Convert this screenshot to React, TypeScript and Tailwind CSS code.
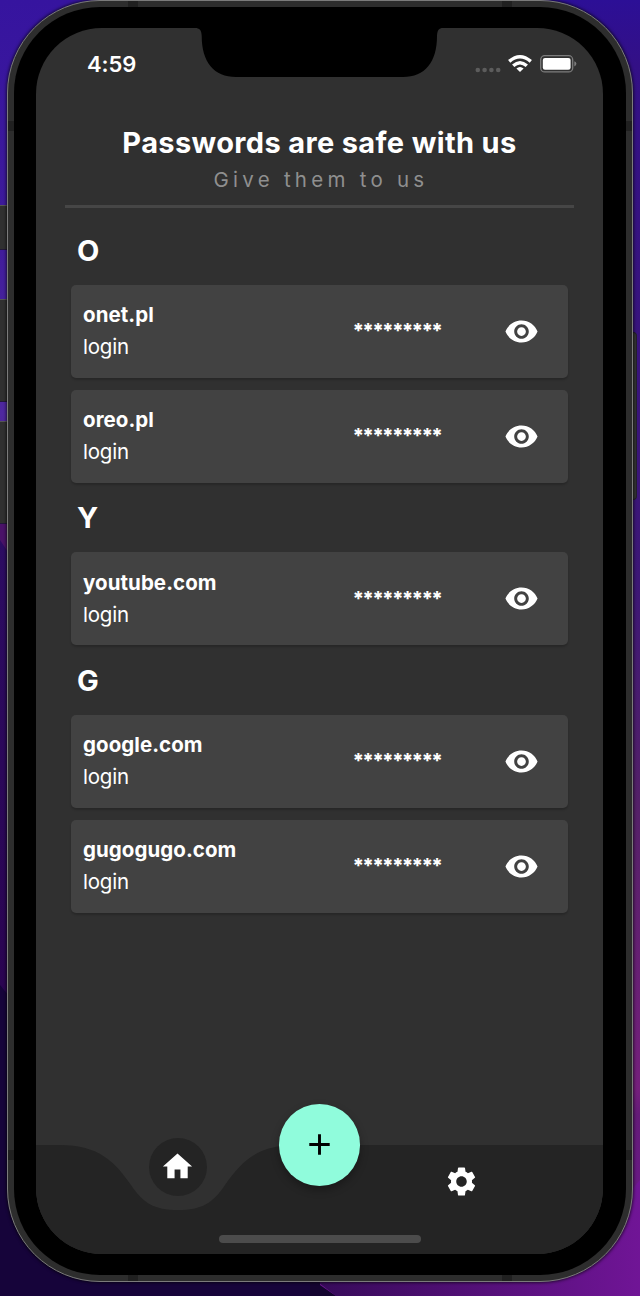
import { MdAdd, MdHome, MdRemoveRedEye, MdSettings } from "react-icons/md";

const sections = [
  { letter: "O", sites: ["onet.pl", "oreo.pl"] },
  { letter: "Y", sites: ["youtube.com"] },
  { letter: "G", sites: ["google.com", "gugogugo.com"] },
];

function Wallpaper() {
  return (
    <svg className="absolute inset-0 h-full w-full" viewBox="0 0 640 1296" preserveAspectRatio="none" aria-hidden="true">
      <defs>
        <linearGradient id="left" x1="0" y1="0" x2="0" y2="1">
          <stop offset="0" stopColor="#36149f" />
          <stop offset="0.16" stopColor="#3d1a9a" />
          <stop offset="0.32" stopColor="#4f28a0" />
          <stop offset="0.4" stopColor="#4a1268" />
        </linearGradient>
        <linearGradient id="leftLow" x1="0" y1="0" x2="0" y2="1">
          <stop offset="0" stopColor="#2c0c62" />
          <stop offset="1" stopColor="#2a0450" />
        </linearGradient>
        <linearGradient id="right" x1="0" y1="0" x2="0" y2="1">
          <stop offset="0" stopColor="#2c0f96" />
          <stop offset="0.05" stopColor="#331086" />
          <stop offset="0.45" stopColor="#3d1776" />
          <stop offset="0.62" stopColor="#542068" />
          <stop offset="0.84" stopColor="#751f7c" />
          <stop offset="0.86" stopColor="#641b78" />
          <stop offset="1" stopColor="#701596" />
        </linearGradient>
        <linearGradient id="bottom" x1="0" y1="0" x2="1" y2="0">
          <stop offset="0" stopColor="#350a58" />
          <stop offset="1" stopColor="#701596" />
        </linearGradient>
      </defs>
      <rect width="320" height="1296" fill="url(#left)" />
      <path d="M0 540L8 552V1000H0Z" fill="url(#leftLow)" />
      <path d="M0 985L8 995V1160L320 1240V1296H0Z" fill="#16043a" />
      <rect x="320" width="320" height="1296" fill="url(#right)" />
      <path d="M310 1276L560 1276L640 1180V1296H336Z" fill="url(#bottom)" />
      <path d="M320 1270V1285L336 1296H310V1270Z" fill="#14042f" />
    </svg>
  );
}

function SideButtons() {
  return (
    <div className="flex w-[7px] flex-col pt-[205px]">
      <div className="h-[45px] border-y border-t-[#555] border-b-[#22183a] bg-[#303030]" />
      <div className="mt-[49px] h-[103px] border-y border-t-[#555] border-b-[#22183a] bg-[#303030]" />
      <div className="mt-[19px] h-[103px] border-y border-t-[#555] border-b-[#22183a] bg-[#303030]" />
    </div>
  );
}

function BandRow() {
  return (
    <div className="flex h-1.5 justify-between px-[120px]">
      <span className="w-2.5 bg-[#202020]" />
      <span className="w-2.5 bg-[#202020]" />
    </div>
  );
}

function BandColumn() {
  return (
    <div className="flex w-1.5 flex-col justify-between pt-[114px] pb-[115px]">
      <span className="h-2.5 bg-[#202020]" />
      <span className="h-2.5 bg-[#202020]" />
    </div>
  );
}

function StatusBar() {
  return (
    <div className="flex h-[72px] items-center justify-between pr-[26px] pl-[51px]">
      <span className="text-[22px] leading-none font-semibold tracking-[-0.1px]">4:59</span>
      <svg className="h-6 w-[102px]" viewBox="475 52 102 24" aria-hidden="true">
        {[477.8, 484.6, 491.4, 498.2].map((x) => (
          <circle key={x} cx={x} cy="70" r="2.3" fill="#5c5c5c" />
        ))}
        <g fill="none" stroke="#fff" strokeWidth="3.4">
          <path d="M509.2 61.4Q520 52 530.8 61.4" />
          <path d="M513.2 65.8Q520 59.6 526.8 65.8" />
        </g>
        <path d="M516.4 68.6Q520 65.4 523.6 68.6L520 72Z" fill="#fff" />
        <rect x="540.7" y="55.7" width="32" height="16.2" rx="4" fill="none" stroke="#7c7c7c" strokeWidth="1.3" />
        <rect x="542.8" y="57.9" width="27.8" height="11.8" rx="2.2" fill="#fff" />
        <path d="M574.3 61.2Q576.4 62 576.4 63.8T574.3 66.4Z" fill="#7c7c7c" />
      </svg>
    </div>
  );
}

function PasswordCard({ site }: { site: string }) {
  return (
    <article className="flex h-[93px] items-center rounded-[5px] bg-[#424242] pr-[29px] pl-3 shadow-[0_2px_2px_rgba(0,0,0,0.18)]">
      <div className="w-[269.5px]">
        <h3 className="text-[20.5px] leading-8 font-bold tracking-[0.06px]">{site}</h3>
        <p className="text-[20.5px] leading-8 tracking-[-0.2px]">login</p>
      </div>
      <span className="flex-1 text-[20px] leading-8 font-extrabold tracking-[-1.8px]">*********</span>
      <MdRemoveRedEye size={35} />
    </article>
  );
}

function BottomNav() {
  return (
    <nav className="relative flex h-[109px] flex-col items-center justify-end pb-[11.5px]">
      <svg className="absolute inset-0 h-full w-full" viewBox="36 1145 567 109" preserveAspectRatio="none" aria-hidden="true">
        <path
          d="M36 1145H60C99 1145 115 1162 131 1185C143 1203 154 1210 178 1210C202 1210 213 1203 225 1185C241 1162 257 1145 296 1145H603V1254H36Z"
          fill="#242424"
        />
      </svg>
      <div className="relative mb-[36px] flex w-full items-center pl-[112.7px]">
        <button className="-mt-5 flex size-[58px] items-center justify-center rounded-full bg-[#242424]" aria-label="Home">
          <MdHome size={35} />
        </button>
        <button
          className="-mt-[63.5px] ml-[72px] flex size-[81.5px] items-center justify-center rounded-full bg-[#90fcdc] text-black shadow-[0_4px_8px_rgba(0,0,0,0.3)]"
          aria-label="Add"
        >
          <MdAdd size={35} />
        </button>
        <button className="mt-[10px] ml-[83.6px]" aria-label="Settings">
          <MdSettings size={35} />
        </button>
      </div>
      <div className="relative h-[7.5px] w-[202px] rounded-full bg-[#4c4c4c]" />
    </nav>
  );
}

function Screen() {
  return (
    <div className="relative flex h-[1226px] w-[567px] flex-col overflow-hidden rounded-[66px] bg-[#303030]">
      <svg className="absolute top-0 left-[159px] h-[49px] w-[248px]" viewBox="195 28 248 49" aria-hidden="true">
        <path d="M195 28C199.5 28 201.5 30 201.7 36C201.7 62 214 77 236 77H403C425 77 437 62 437 36C437.3 30 439 28 443 28Z" fill="#000" />
      </svg>
      <StatusBar />
      <header className="mx-[29px] flex h-[108px] flex-col items-center border-b-3 border-[#464646] pt-[25px]">
        <h1 className="text-[29px] leading-9 font-bold tracking-[0.36px] whitespace-nowrap">Passwords are safe with us</h1>
        <p className="pt-px pl-[3px] text-[20.5px] leading-9 tracking-[4.25px] text-[#8f8f8f]">Give them to us</p>
      </header>
      <main className="flex-1 px-[35px] pt-[19px]">
        {sections.map(({ letter, sites }) => (
          <section key={letter}>
            <h2 className="flex h-[46px] items-center pl-1.5 text-[29px] leading-none font-bold">{letter}</h2>
            <div className="flex flex-col gap-3 py-[11.8px]">
              {sites.map((site) => (
                <PasswordCard key={site} site={site} />
              ))}
            </div>
          </section>
        ))}
      </main>
      <BottomNav />
    </div>
  );
}

export default function App() {
  return (
    <div className="relative h-[1296px] w-[640px] overflow-hidden bg-[#14042f] font-['Inter','Liberation_Sans',sans-serif] text-white">
      <Wallpaper />
      <div className="relative flex items-start">
        <SideButtons />
        <div className="relative z-10 flex h-[1282px] w-[626px] flex-col rounded-[93px] border border-[#7b7b7b] bg-[#2d2d2d] shadow-[0_0_3px_1px_rgba(0,0,0,0.6)]">
          <BandRow />
          <div className="flex flex-1">
            <BandColumn />
            <div className="flex-1 rounded-[86px] bg-black px-[22px] py-[21px]">
              <Screen />
            </div>
            <BandColumn />
          </div>
          <BandRow />
        </div>
        <div className="mt-[332px] h-[168px] w-1 rounded-r-sm border-y border-r border-[#24202c] bg-[#343434]" />
      </div>
    </div>
  );
}
